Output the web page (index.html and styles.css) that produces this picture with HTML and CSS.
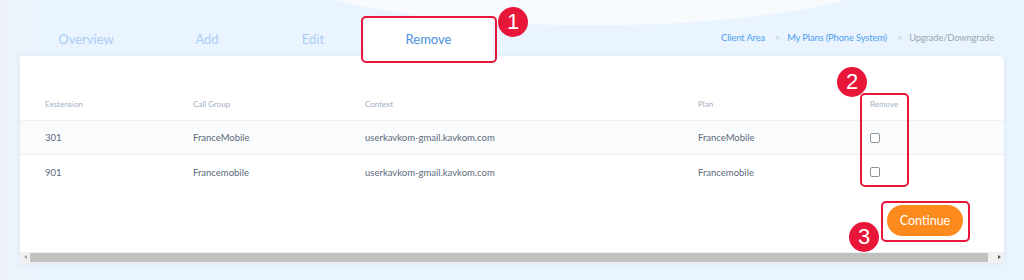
FILE: index.html
```html
<!DOCTYPE html>
<html lang="en">
<head>
<meta charset="utf-8">
<title>Remove extensions</title>
<link rel="stylesheet" href="styles.css">
</head>
<body>
<div class="page">
  <div class="topbar">
    <nav class="tabs">
      <a class="tab tab-overview">Overview</a>
      <a class="tab tab-add">Add</a>
      <a class="tab tab-edit">Edit</a>
      <a class="tab tab-remove active">Remove</a>
    </nav>
    <div class="crumbs">
      <a class="crumb-link">Client Area</a>
      <span class="crumb-sep">&gt;</span>
      <a class="crumb-link">My Plans (Phone System)</a>
      <span class="crumb-sep">&gt;</span>
      <span class="crumb-current">Upgrade/Downgrade</span>
    </div>
  </div>

  <div class="card">
    <div class="table">
      <div class="row head">
        <div class="cell">Exstension</div>
        <div class="cell">Call Group</div>
        <div class="cell">Context</div>
        <div class="cell">Plan</div>
        <div class="cell">Remove</div>
      </div>
      <div class="row body alt">
        <div class="cell">301</div>
        <div class="cell">FranceMobile</div>
        <div class="cell">userkavkom-gmail.kavkom.com</div>
        <div class="cell">FranceMobile</div>
        <div class="cell"><span class="check"></span></div>
      </div>
      <div class="row body">
        <div class="cell">901</div>
        <div class="cell">Francemobile</div>
        <div class="cell">userkavkom-gmail.kavkom.com</div>
        <div class="cell">Francemobile</div>
        <div class="cell"><span class="check"></span></div>
      </div>
    </div>
    <div class="actions">
      <button class="btn-continue">Continue</button>
    </div>
    <div class="hscroll">
      <span class="arrow arrow-left"></span>
      <span class="thumb"></span>
      <span class="arrow arrow-right"></span>
    </div>
  </div>

  <div class="mark mark-1"></div>
  <div class="badge badge-1">1</div>
  <div class="mark mark-2"></div>
  <div class="badge badge-2">2</div>
  <div class="mark mark-3"></div>
  <div class="badge badge-3">3</div>
</div>
</body>
</html>
```

FILE: styles.css
```css
* { box-sizing: border-box; }

html, body {
  margin: 0;
  padding: 0;
}

body {
  width: 1024px;
  height: 280px;
  overflow: hidden;
  font-family: "Lato", "Noto Sans", sans-serif;
  background:
    radial-gradient(ellipse 330px 68px at 590px -42px, #f8fbfe 0 98%, rgba(248,251,254,0) 100%),
    linear-gradient(90deg, #eef2f7 0, #ecf3fb 20px, rgba(234,245,255,0) 40px),
    #eaf4fe;
}

.page {
  position: relative;
  padding: 18px 20px 0 20px;
}

.topbar {
  display: flex;
  justify-content: space-between;
  align-items: flex-end;
  height: 38px;
}

.tabs {
  display: flex;
  height: 38px;
}

.tab {
  display: flex;
  align-items: center;
  justify-content: center;
  padding-top: 4px;
  height: 38px;
  font-size: 13px;
  color: #a9cdf5;
}

.tab-overview { width: 132px; }
.tab-add { width: 110px; }
.tab-edit { width: 102px; }
.tab-remove { width: 129px; }

.tab.active {
  background: #ffffff;
  color: #4a8ee0;
  border-radius: 4px 4px 0 0;
}

.crumbs {
  display: flex;
  align-items: center;
  padding-right: 10px;
  padding-bottom: 13px;
  font-size: 9.3px;
  letter-spacing: -0.1px;
}

.crumb-link { color: #4b9ef0; }
.crumb-current { color: #98a6b5; }
.crumb-sep {
  color: #bcc8d4;
  font-size: 9px;
  margin: 0 7px 0 10px;
}

.card {
  background: #ffffff;
  border-radius: 0 5px 5px 5px;
  box-shadow: 0 1px 6px rgba(140, 170, 200, 0.18);
  height: 207px;
  display: flex;
  flex-direction: column;
  overflow: hidden;
}

.table {
  padding-top: 32px;
}

.row {
  display: grid;
  grid-template-columns: 148px 172px 333px 172px 1fr;
  padding-left: 25px;
  align-items: center;
}

.row.head {
  height: 33px;
  font-size: 8px;
  color: #9fb0c4;
  border-bottom: 1px solid #eef1f4;
}

.row.body {
  height: 34px;
  font-size: 9.5px;
  color: #5c6a7b;
}

.row.alt {
  background: #fafbfc;
  border-bottom: 1px solid #eef1f4;
}

.check {
  display: block;
  width: 10px;
  height: 10px;
  border: 1px solid #8e959c;
  border-radius: 2px;
  background: #fff;
}

.actions {
  display: flex;
  justify-content: flex-end;
  padding: 16px 41px 0 0;
  height: 63px;
}

.btn-continue {
  width: 76px;
  height: 31px;
  border: none;
  border-radius: 16px;
  background: #fd8a1d;
  color: #ffffff;
  font-family: inherit;
  font-size: 12.5px;
  padding: 0;
}

.hscroll {
  display: flex;
  align-items: stretch;
  height: 11px;
  background: #f1f1f1;
  margin-top: auto;
}

.arrow {
  position: relative;
  width: 10px;
  flex: none;
}

.arrow-right { width: 16px; }

.arrow::after {
  content: "";
  position: absolute;
  top: 3px;
  border-top: 2.5px solid transparent;
  border-bottom: 2.5px solid transparent;
}

.arrow-left::after {
  left: 4px;
  border-right: 3px solid #a3a3a3;
}

.arrow-right::after {
  left: 10px;
  border-left: 3px solid #505050;
}

.thumb {
  flex: 1;
  background: #c1c1c1;
  margin: 1px 0;
}

/* annotations */
.mark {
  position: absolute;
  border: 2px solid #e8173a;
  border-radius: 5px;
}

.mark-1 { left: 361px; top: 16px; width: 136px; height: 47px; }
.mark-2 { left: 860px; top: 93px; width: 49px; height: 94px; }
.mark-3 { left: 881px; top: 201px; width: 89px; height: 41px; }

.badge {
  position: absolute;
  width: 30px;
  height: 30px;
  border-radius: 50%;
  background: #e8173a;
  color: #ffffff;
  font-family: "Liberation Sans", "Noto Sans", sans-serif;
  font-size: 22px;
  line-height: 30px;
  text-align: center;
}

.badge-1 { left: 498px; top: 7px; }
.badge-2 { left: 837px; top: 67px; }
.badge-3 { left: 849px; top: 222px; }
```
